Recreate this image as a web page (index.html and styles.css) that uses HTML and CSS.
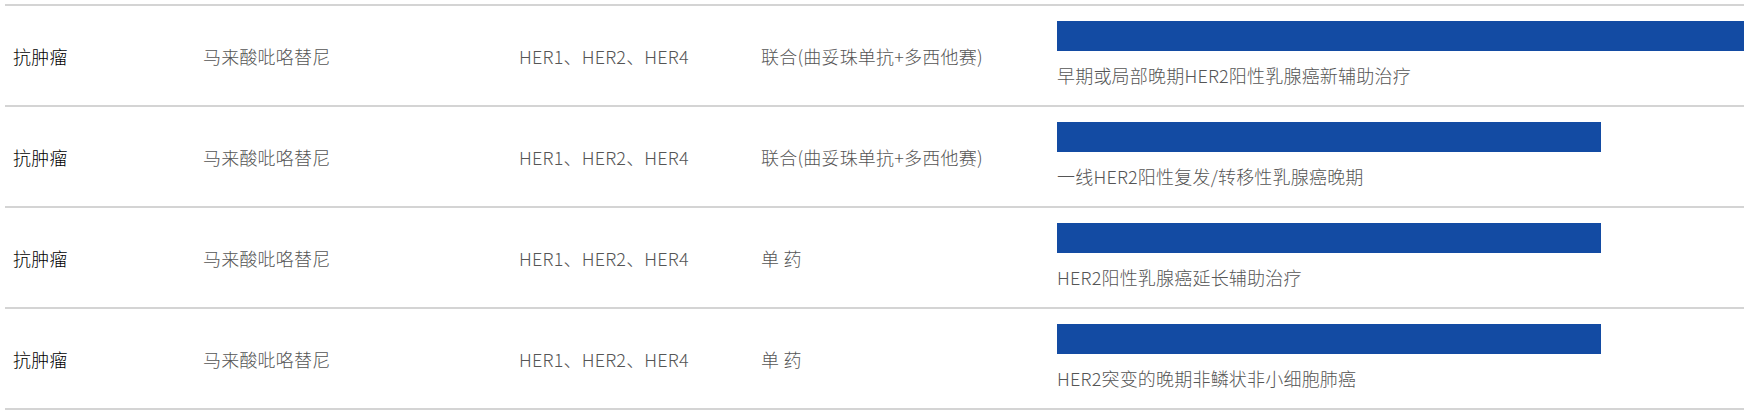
FILE: index.html
```html
<!DOCTYPE html>
<html lang="zh-CN">
<head>
<meta charset="utf-8">
<title>适应症</title>
<link rel="stylesheet" href="styles.css">
</head>
<body>
<div class="table">
  <div class="row">
    <div class="cell cat">抗肿瘤</div>
    <div class="cell">马来酸吡咯替尼</div>
    <div class="cell">HER1、HER2、HER4</div>
    <div class="cell">联合(曲妥珠单抗+多西他赛)</div>
    <div class="cell ind">
      <div class="bar" style="width:100%"></div>
      <div class="ind-text">早期或局部晚期HER2阳性乳腺癌新辅助治疗</div>
    </div>
  </div>
  <div class="row">
    <div class="cell cat">抗肿瘤</div>
    <div class="cell">马来酸吡咯替尼</div>
    <div class="cell">HER1、HER2、HER4</div>
    <div class="cell">联合(曲妥珠单抗+多西他赛)</div>
    <div class="cell ind">
      <div class="bar" style="width:79.2%"></div>
      <div class="ind-text">一线HER2阳性复发/转移性乳腺癌晚期</div>
    </div>
  </div>
  <div class="row">
    <div class="cell cat">抗肿瘤</div>
    <div class="cell">马来酸吡咯替尼</div>
    <div class="cell">HER1、HER2、HER4</div>
    <div class="cell">单 药</div>
    <div class="cell ind">
      <div class="bar" style="width:79.2%"></div>
      <div class="ind-text">HER2阳性乳腺癌延长辅助治疗</div>
    </div>
  </div>
  <div class="row">
    <div class="cell cat">抗肿瘤</div>
    <div class="cell">马来酸吡咯替尼</div>
    <div class="cell">HER1、HER2、HER4</div>
    <div class="cell">单 药</div>
    <div class="cell ind">
      <div class="bar" style="width:79.2%"></div>
      <div class="ind-text">HER2突变的晚期非鳞状非小细胞肺癌</div>
    </div>
  </div>
</div>
</body>
</html>
```

FILE: styles.css
```css
html, body {
  margin: 0;
  padding: 0;
  background: #ffffff;
}

body {
  font-family: "Noto Sans CJK SC", "Noto Sans", sans-serif;
  font-size: 18px;
  font-weight: 300;
  color: #555555;
}

.table {
  width: 1739px;
  margin: 4px 0 0 5px;
  border-top: 2px solid #d4d4d4;
}

.row {
  display: grid;
  grid-template-columns: 190px 316px 242px 296px 695px;
  height: 99px;
  border-bottom: 2px solid #d4d4d4;
}

.cell {
  display: flex;
  align-items: center;
  padding-left: 8px;
  line-height: 24px;
  white-space: nowrap;
  letter-spacing: 0.2px;
}

.cat {
  color: #000000;
}

.ind {
  flex-direction: column;
  align-items: flex-start;
  justify-content: flex-start;
  padding-top: 15px;
}

.bar {
  height: 30px;
  background: #134ba3;
}

.ind-text {
  margin-top: 12px;
}
```
